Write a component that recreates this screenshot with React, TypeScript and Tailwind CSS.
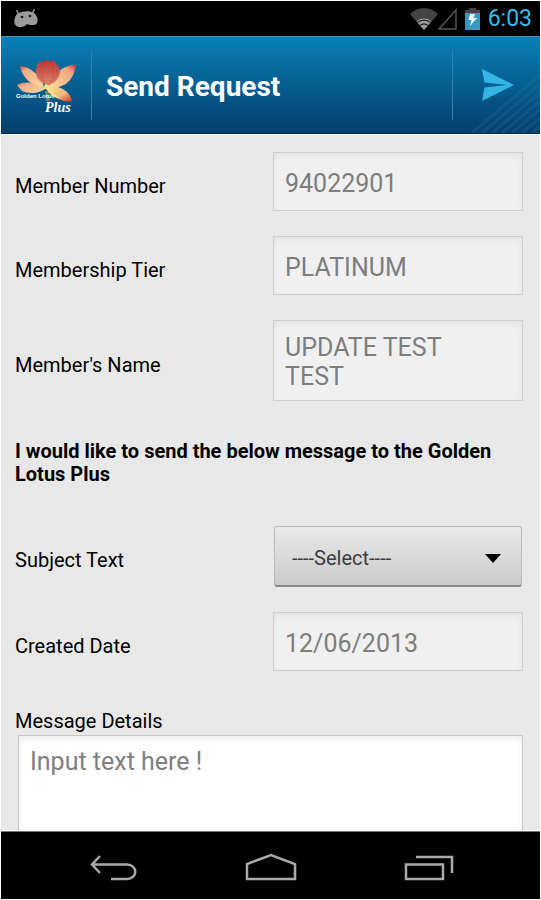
import React, { useState } from 'react';

interface ReadOnlyFieldProps {
  id: string;
  label: string;
  value: string;
  multiline?: boolean;
}

const fieldStyle =
  'block w-full resize-none overflow-hidden rounded-none border border-[#cfcfcf] bg-[#f0f0f0] px-[11px] text-[25px] leading-[29px] text-[#7d7d7d] shadow-[inset_0_3px_6px_rgba(0,0,0,0.06)] outline-none';

const rowStyle = 'grid grid-cols-[258fr_250fr] items-center';

const ReadOnlyField: React.FC<ReadOnlyFieldProps> = ({ id, label, value, multiline }) => (
  <div className={rowStyle}>
    <label htmlFor={id} className="pt-[9px]">{label}</label>
    {multiline ? (
      <textarea id={id} rows={2} readOnly value={value} className={`${fieldStyle} pt-3 pb-[9px]`} />
    ) : (
      <input id={id} type="text" readOnly value={value} className={`${fieldStyle} pt-4 pb-3`} />
    )}
  </div>
);

const LotusLogo = () => (
  <svg viewBox="0 0 62 60" className="h-[60px] w-[62px]" role="img" aria-label="Golden Lotus Plus">
    <defs>
      <linearGradient id="bud" x1="0" y1="0" x2="0" y2="1">
        <stop offset="0" stopColor="#b9352f" />
        <stop offset="0.55" stopColor="#cf5f50" />
        <stop offset="1" stopColor="#e08a6c" />
      </linearGradient>
      <linearGradient id="petalLeft" x1="0" y1="0" x2="1" y2="1">
        <stop offset="0" stopColor="#dd4537" />
        <stop offset="0.2" stopColor="#f0aa86" />
        <stop offset="1" stopColor="#f7d9a0" />
      </linearGradient>
      <linearGradient id="petalRight" x1="1" y1="0" x2="0" y2="1">
        <stop offset="0" stopColor="#e12c29" />
        <stop offset="0.25" stopColor="#efa582" />
        <stop offset="1" stopColor="#f4dc9c" />
      </linearGradient>
      <linearGradient id="petalLow" x1="0" y1="0" x2="1" y2="1">
        <stop offset="0" stopColor="#f7e78e" />
        <stop offset="0.6" stopColor="#f2b783" />
        <stop offset="1" stopColor="#dc302a" />
      </linearGradient>
    </defs>
    <path d="M29 36 L33 36 L34 46 L30 46 Z" fill="#66876a" />
    <path d="M1 30 C8 26 20 27 30 33 C24 39 12 39 6 36 Z" fill="url(#petalLeft)" />
    <path d="M4 11 C14 12 25 20 28 32 C17 31 7 25 4 11 Z" fill="url(#petalLeft)" />
    <path d="M60 10 C47 10 38 18 33 32 C46 34 57 28 60 10 Z" fill="url(#petalRight)" />
    <path d="M31 30 C40 31 53 33 56 46 C49 48 38 43 33 37 Z" fill="url(#petalLow)" />
    <path d="M20 17 C20 12 21 9 23 7 L27 7 L31 4 L34 7 L38 5 L40 9 C43 11 44 14 44 18 C42 26 37 29 33 30 C26 29 20 25 20 17 Z" fill="url(#bud)" />
    <path d="M30 7 C24 13 24 23 31 29 M34 7 C39 13 38 23 33 29 M23 10 C21 16 24 24 28 27 M40 11 C42 17 40 23 36 27" fill="none" stroke="#a84039" strokeWidth="1" opacity="0.4" />
    <path d="M28 33 C28 28 31 28 34 32 C36 37 40 41 43 43 C36 42 33 38 31 35 Z" fill="#f5df8b" />
    <text x="0" y="43" fill="#ffffff" className="font-['Liberation_Sans_Narrow','Liberation_Sans',sans-serif] text-[6px] font-bold">
      Golden Lotus
    </text>
    <text x="29" y="57" fill="#ffffff" className="font-['Liberation_Serif',serif] text-[14px] font-bold italic">
      Plus
    </text>
  </svg>
);

const StatusBar = () => (
  <div className="flex h-[35px] shrink-0 items-center bg-black pr-2 pl-[13px]">
    <svg viewBox="0 0 24 19" className="h-[19px] w-6" role="img" aria-label="Android">
      <path d="M2.500 1 L4.500 5 M20.500 0 L18.500 4" stroke="#9b9b9b" strokeWidth="1.500" />
      <path d="M3 5 C7 2 16 1 20 4 C25 8 25 16 19 16 C16 16 15 16 13 15 C11 17 10 18 6 18 C-1 18 -1 10 3 5 Z" fill="#9b9b9b" />
      <circle cx="8" cy="8" r="1.300" fill="#111" />
      <circle cx="16" cy="7" r="1.300" fill="#111" />
    </svg>
    <div className="ml-auto flex items-center">
      <svg viewBox="0 0 28 22" className="h-[22px] w-7" role="img" aria-label="Wi-Fi">
        <path d="M0 6 C8 -2 20 -2 28 6 L14 22 Z" fill="#444444" />
        <path d="M14 22 L6.500 13.500 C10.500 9.500 17.500 9.500 21.500 13.500 Z" fill="#999999" />
        <path d="M7.500 14.500 C11.500 11.500 16.500 11.500 20.500 14.500 M10 17.500 C12.500 15.500 15.500 15.500 18 17.500" fill="none" stroke="#000" strokeWidth="1" />
      </svg>
      <svg viewBox="1 0 19 22" className="h-[22px] w-[19px]" role="img" aria-label="No signal">
        <path d="M2 21 H19 V2 Z" fill="none" stroke="#555555" strokeWidth="1.500" />
      </svg>
      <svg viewBox="0 0 15 22" className="ml-2 h-[22px] w-[15px]" role="img" aria-label="Charging">
        <path d="M0 5 V2 H4 V0 H11 V2 H15 V5 Z" fill="#444444" />
        <path d="M0 5 H15 V22 H0 Z" fill="#3899be" />
        <path d="M5 6 H10 L8.500 10 H12 L5 18 L6.500 12 H3.500 Z" fill="#f4fbfe" />
      </svg>
      <span className="ml-2 text-[23px] leading-7 text-[#35bdf0]">6:03</span>
    </div>
  </div>
);

const Header = () => (
  <header className="relative flex h-[98px] shrink-0 items-center border-t border-b border-t-[#3a93bb] border-b-[#052c50] bg-linear-to-b from-[#0a80b6] to-[#033f6d] pr-[26px] pl-[15px]">
    <svg viewBox="0 0 70 60" className="absolute right-0 bottom-0 h-[60px] w-[70px]" aria-hidden="true">
      <path
        d="M2 60 L70 2 M12 60 L70 11 M22 60 L70 20 M32 60 L70 28 M42 60 L70 36 M52 60 L70 45 M62 60 L70 53"
        stroke="#2b78a8"
        strokeWidth="3"
        opacity="0.25"
      />
    </svg>
    <LotusLogo />
    <div className="ml-[13px] h-[70px] w-px bg-[#3a7ca5]" />
    <h1 className="ml-[14px] pt-1 text-[28px] leading-8 font-bold text-white">Send Request</h1>
    <div className="ml-auto h-[70px] w-px bg-[#3a7ca5]" />
    <button type="button" aria-label="Send" className="relative ml-[29px]">
      <svg viewBox="0 0 32 32" className="block h-8 w-8">
        <path d="M0 0 L32 16 L0 32 L2.500 18.500 L25 16 L2.500 13.500 Z" fill="#33b5e5" />
      </svg>
    </button>
  </header>
);

const NavBar = () => (
  <nav className="flex h-[68px] shrink-0 items-center justify-between border-t border-[#777777] bg-black px-[86px] pt-[5px]">
    <button type="button" aria-label="Back">
      <svg viewBox="0 0 52 30" className="block h-[30px] w-[52px]" fill="none" stroke="#aaaaaa" strokeWidth="2.500">
        <path d="M13 3 L5 11.500 L13 20 M5 11.500 H40 C51 11.500 51 26 40 26 H24" />
      </svg>
    </button>
    <button type="button" aria-label="Home">
      <svg viewBox="0 0 52 30" className="block h-[30px] w-[52px]" fill="none" stroke="#aaaaaa" strokeWidth="2.500">
        <path d="M2 26 V11 L26 2 L50 11 V26 Z" />
      </svg>
    </button>
    <button type="button" aria-label="Recent apps">
      <svg viewBox="0 0 52 30" className="block h-[30px] w-[52px]" fill="none" stroke="#aaaaaa" strokeWidth="2.500">
        <path d="M4 11.500 H41 V26 H4 Z M14 4 H50 V20" />
      </svg>
    </button>
  </nav>
);

const App: React.FC = () => {
  const [subject, setSubject] = useState('');
  const [message, setMessage] = useState('');

  return (
    <div className="flex h-screen flex-col overflow-hidden bg-white p-px font-['Roboto',sans-serif]">
      <StatusBar />
      <Header />

      <main className="min-h-0 flex-1 overflow-hidden border-t border-b border-white bg-[#e8e8e8] pt-[17px] pr-[17px] pl-[14px] text-[20px] leading-[23px] text-black">
        <form className="flex flex-col gap-[25px]">
          <ReadOnlyField id="member-number" label="Member Number" value="94022901" />
          <ReadOnlyField id="membership-tier" label="Membership Tier" value="PLATINUM" />
          <ReadOnlyField id="member-name" label="Member's Name" value={'UPDATE TEST\nTEST'} multiline />

          <p className="mt-[14px] mb-[15px] font-bold">
            I would like to send the below message to the Golden Lotus Plus
          </p>

          <div className={rowStyle}>
            <label htmlFor="subject" className="pt-2">Subject Text</label>
            <div className="relative mx-px">
              <select
                id="subject"
                value={subject}
                onChange={(e) => setSubject(e.target.value)}
                className="block h-[61px] w-full appearance-none rounded-[3px] border border-b-2 border-[#bbbbbb] border-b-[#8b8b8b] bg-linear-to-b from-[#e9e9e9] to-[#cbcbcb] pt-1 pr-12 pl-[17px] text-[20px] text-[#3c3c3c] outline-none"
              >
                <option value="">----Select----</option>
              </select>
              <svg viewBox="0 0 16 9" className="pointer-events-none absolute top-7 right-[21px] h-[9px] w-4" aria-hidden="true">
                <path d="M0 0 H16 L8 9 Z" fill="#000" />
              </svg>
            </div>
          </div>

          <ReadOnlyField id="created-date" label="Created Date" value="12/06/2013" />

          <div className="pt-[14px]">
            <label htmlFor="message" className="mb-[2px] block">Message Details</label>
            <textarea
              id="message"
              rows={5}
              value={message}
              onChange={(e) => setMessage(e.target.value)}
              placeholder="Input text here !"
              className="ml-[3px] block w-[calc(100%-3px)] resize-none border border-[#c8c8c8] bg-white px-[11px] py-[11px] text-[25px] leading-[29px] text-black shadow-[inset_0_3px_6px_rgba(0,0,0,0.08)] outline-none placeholder:text-[#808080]"
            />
          </div>
        </form>
      </main>

      <NavBar />
    </div>
  );
};

export default App;
